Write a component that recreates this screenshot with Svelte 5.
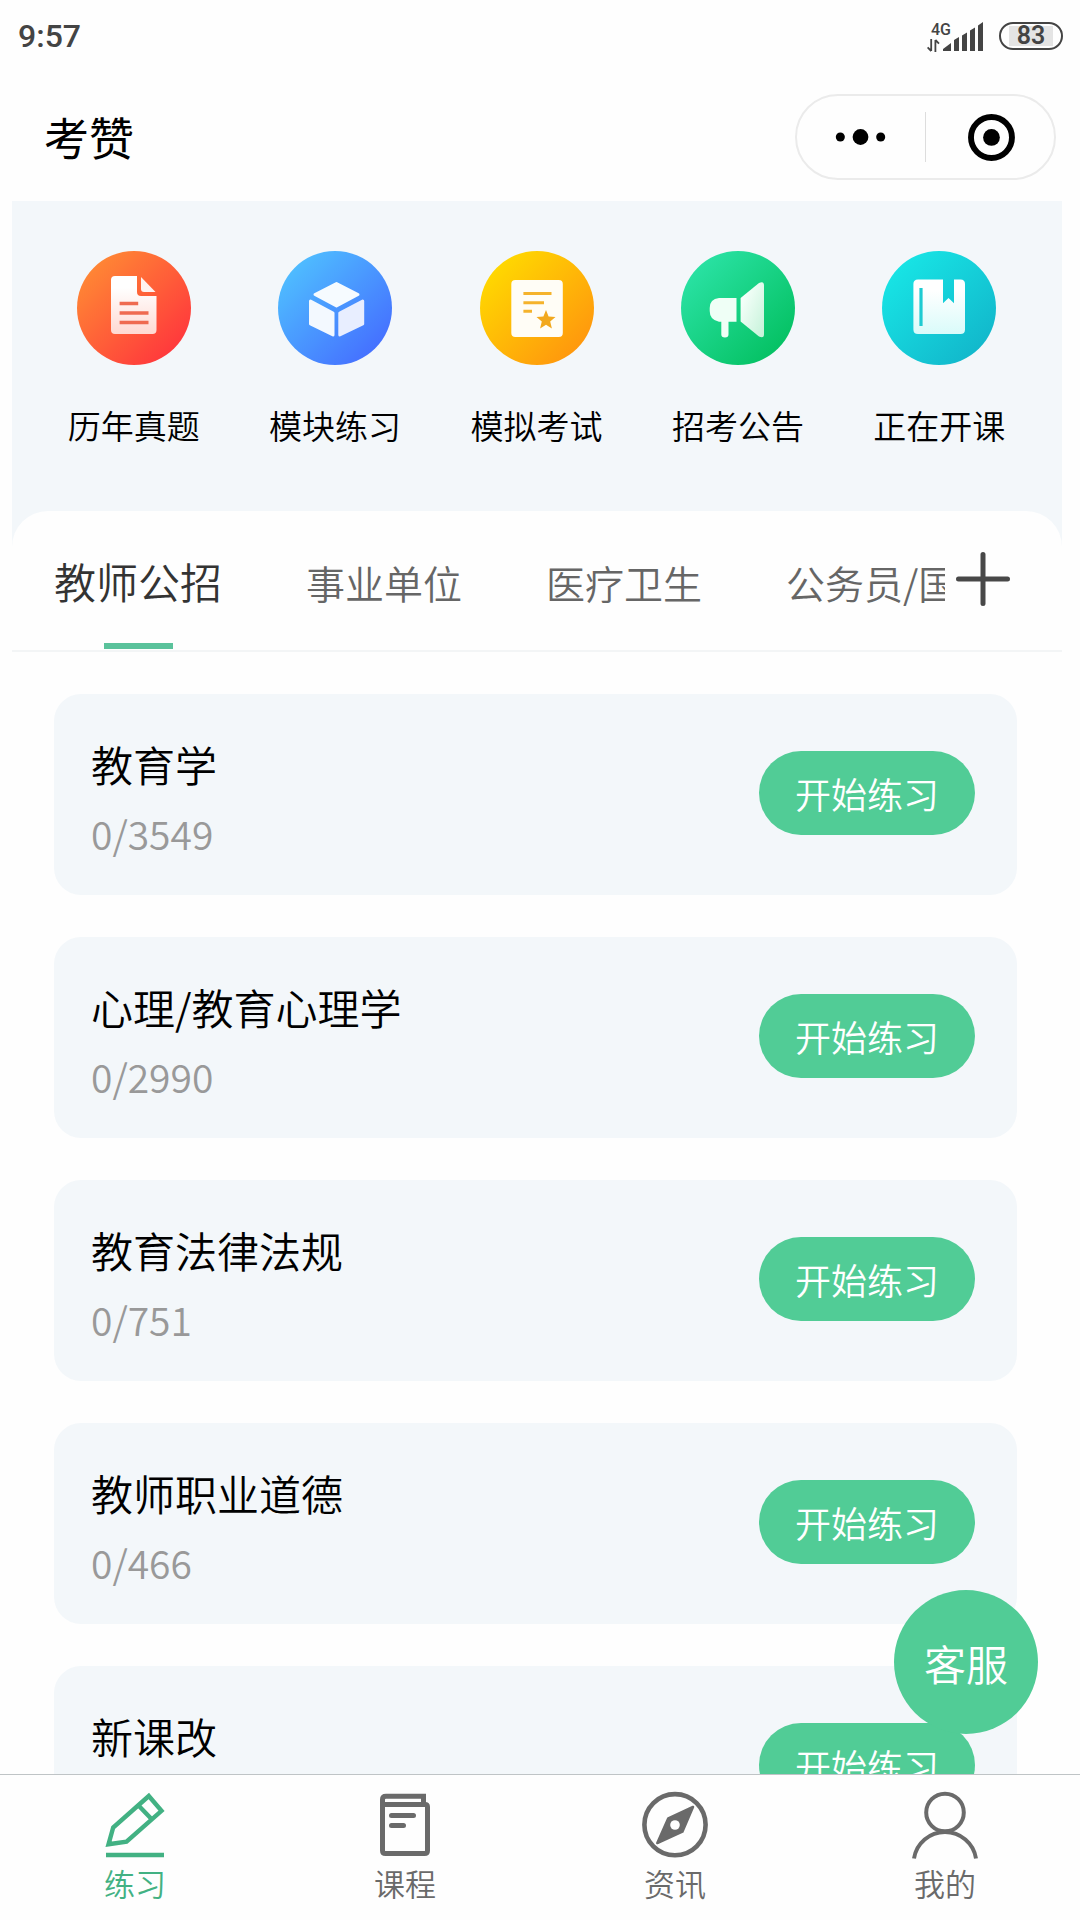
<script lang="ts">
	const entries = [
		{ name: 'paper', label: '历年真题' },
		{ name: 'module', label: '模块练习' },
		{ name: 'mock', label: '模拟考试' },
		{ name: 'notice', label: '招考公告' },
		{ name: 'course', label: '正在开课' }
	];

	const categories = ['教师公招', '事业单位', '医疗卫生', '公务员/国企'];

	const subjects = [
		{ title: '教育学', done: 0, total: 3549 },
		{ title: '心理/教育心理学', done: 0, total: 2990 },
		{ title: '教育法律法规', done: 0, total: 751 },
		{ title: '教师职业道德', done: 0, total: 466 },
		{ title: '新课改', done: 0, total: 320 }
	];

	const navItems = [
		{ name: 'practice', label: '练习' },
		{ name: 'lessons', label: '课程' },
		{ name: 'news', label: '资讯' },
		{ name: 'mine', label: '我的' }
	];

	let activeCategory = $state(0);
	let activeNav = $state('practice');
</script>

<div class="app">
	<div class="status">
		<span class="time">9:57</span>
		<div class="status-right">
			<div class="network">
				<span class="net-type">4G</span>
				<svg class="arrows" width="13" height="13" viewBox="0 0 13 13">
					<path d="M4.2 0V12M4.2 12L.6 8.4M8.4 13V1M8.4 1L12 4.6" fill="none" stroke="#444" stroke-width="1.8" />
				</svg>
			</div>
			<svg class="signal" width="41" height="30" viewBox="0 0 41 30">
				<path d="M0 30V28L8 22V30ZM11 30V19L16 16V30ZM19 30V14.5L24 11.5V30ZM27 30V9.5L32 6.5V30ZM35 30V4.5L40 1V30Z" fill="#444" />
			</svg>
			<div class="battery"><span>83</span></div>
		</div>
	</div>

	<header>
		<h1>考赞</h1>
		<div class="capsule">
			<svg width="130" height="50" viewBox="0 0 130 50">
				<circle cx="44" cy="25" r="4.6" />
				<circle cx="64.5" cy="25" r="8" />
				<circle cx="85" cy="25" r="4.6" />
			</svg>
			<svg class="close" width="130" height="50" viewBox="0 0 130 50">
				<circle cx="66.5" cy="25.5" r="20.8" fill="none" stroke="#000" stroke-width="6" />
				<circle cx="66.5" cy="25.5" r="8.5" />
			</svg>
		</div>
	</header>

	<main>
		<nav class="entries">
			{#each entries as entry}
				<div class="entry">
					<div class="disc {entry.name}">
						<svg viewBox="0 0 114 114">
							{#if entry.name === 'paper'}
								<linearGradient id="g-paper" x1="0" y1="0" x2="0" y2="1">
									<stop offset="0.2" stop-color="#fff" />
									<stop offset="1" stop-color="#ffd9d2" />
								</linearGradient>
								<path d="M38 25H60V41Q60 45 64 45H79.5V79Q79.5 83 75.5 83H38Q34 83 34 79V29Q34 25 38 25Z" fill="url(#g-paper)" />
								<path d="M64 26L78.5 41H67Q64 41 64 38Z" fill="#fff2ef" />
								<path d="M42.6 52.5H61.2M42.6 62H71.5M42.6 71.5H71.5" stroke="#ef6a50" stroke-width="3.4" />
							{:else if entry.name === 'module'}
								<linearGradient id="g-module" x1="0" y1="0" x2="1" y2="1">
									<stop offset="0.2" stop-color="#fff" />
									<stop offset="1" stop-color="#dfe6ff" />
								</linearGradient>
								<g stroke-width="3" stroke-linejoin="round">
									<path d="M58.5 32.5L80 43.5L58.5 55L37 43.5Z" fill="#f6fbff" stroke="#f6fbff" />
									<path d="M32.5 50L55 62V84L32.5 73Z" fill="#f3f9ff" stroke="#f3f9ff" />
									<path d="M84.7 50L61.8 62V84L84.7 73Z" fill="#e8eeff" stroke="#e8eeff" />
								</g>
							{:else if entry.name === 'mock'}
								<rect x="31.3" y="29" width="51.5" height="57" rx="4" fill="#fffdf6" />
								<path d="M43.4 42.5H71.5M43.4 51.7H64M43.4 60.3H52" stroke="#f5b32c" stroke-width="3" />
								<path d="M66 59L68.6 65.6L75.5 66.1L70.2 70.6L71.9 77.4L66 73.7L60.1 77.4L61.8 70.6L56.5 66.1L63.4 65.6Z" fill="#f2a81d" />
							{:else if entry.name === 'notice'}
								<linearGradient id="g-notice" x1="0" y1="0" x2="1" y2="1">
									<stop offset="0.2" stop-color="#f4fff9" />
									<stop offset="1" stop-color="#c4f2d8" />
								</linearGradient>
								<path d="M38 47H55.5V70.7H47.5V83.5Q47.5 86.5 44 86.5Q40.3 86.5 40.3 83.5V70.7H38Q28.7 69 28.7 60V57Q28.7 48 38 47Z" fill="#effff6" />
								<path d="M59.6 47L78 32Q83 29.5 83 34.5V83Q83 88 78 85.5L59.6 70.5Z" fill="url(#g-notice)" />
							{:else}
								<linearGradient id="g-course" x1="0" y1="0" x2="0" y2="1">
									<stop offset="0.2" stop-color="#fff" />
									<stop offset="1" stop-color="#d9fbfa" />
								</linearGradient>
								<path d="M36 28.5H61V52.3L66.5 47L72 52.3V28.5H78.5Q83 28.5 83 33V78.5Q83 83 78.5 83H36Q31.4 83 31.4 78.5V33Q31.4 28.5 36 28.5Z" fill="url(#g-course)" />
								<path d="M39 37V75" stroke="#1fcbd2" stroke-width="3.2" />
							{/if}
						</svg>
					</div>
					<span>{entry.label}</span>
				</div>
			{/each}
		</nav>

		<section class="sheet">
			<div class="categories">
				<div class="scroller">
					{#each categories as category, index}
						<button
							class="category"
							class:active={index === activeCategory}
							onclick={() => (activeCategory = index)}
						>
							{category}
						</button>
					{/each}
				</div>
				<svg class="plus" width="54" height="54" viewBox="0 0 54 54">
					<path d="M2.5 27H51.5M27 2.5V51.5" stroke="#484848" stroke-width="5" stroke-linecap="round" />
				</svg>
			</div>

			<div class="subjects">
				{#each subjects as subject}
					<article class="card">
						<div>
							<h2>{subject.title}</h2>
							<p>{subject.done}/{subject.total}</p>
						</div>
						<button class="start">开始练习</button>
					</article>
				{/each}
			</div>
		</section>
	</main>

	<button class="service">客服</button>

	<footer>
		{#each navItems as item}
			<button
				class="nav-item"
				class:active={item.name === activeNav}
				onclick={() => (activeNav = item.name)}
			>
				<svg width="72" height="72" viewBox="0 0 72 72" fill="none" stroke="currentColor">
					{#if item.name === 'practice'}
						<path d="M49.8 8L62.5 22.8L27.5 53.7L9.5 56.3L14.2 39.5ZM39.5 17.5L52.5 31" stroke-width="4.4" />
						<path d="M7 67H65" stroke-width="4.4" />
					{:else if item.name === 'lessons'}
						<path d="M13.5 18V11.5Q13.5 8.3 17 8.3H54.5V15" stroke-width="5" />
						<path d="M13.5 16.5H56Q58.5 16.5 58.5 19V62.5Q58.5 65.5 55.5 65.5H16.5Q13.5 65.5 13.5 62.5Z" stroke-width="5" />
						<path d="M22.5 27.5H44.5M22.5 37.5H34.5" stroke-width="5" stroke-linecap="round" />
					{:else if item.name === 'news'}
						<circle cx="36" cy="36.7" r="30.6" stroke-width="4.6" />
						<path d="M54 19L29.3 30.3L18.3 55L43.4 43.7Z" fill="currentColor" stroke-width="2.5" stroke-linejoin="round" />
						<circle cx="36" cy="37" r="4.8" fill="#fff" stroke="none" />
					{:else}
						<circle cx="36" cy="24.5" r="18.8" stroke-width="4" />
						<path d="M5 70.5A31.4 31.4 0 0 1 67 70.5" stroke-width="4" />
					{/if}
				</svg>
				<span>{item.label}</span>
			</button>
		{/each}
	</footer>
</div>

<style>
	:global(body) {
		background: #fff;
	}

	.app {
		position: relative;
		display: flex;
		flex-direction: column;
		width: 1080px;
		height: 1920px;
		overflow: hidden;
		background: #fefefe;
		font-family: 'Noto Sans CJK SC', sans-serif;
		font-weight: 350;
	}

	h1,
	h2,
	p {
		margin: 0;
		font-weight: inherit;
	}

	button {
		padding: 0;
		border: none;
		background: none;
		color: inherit;
		font: inherit;
	}

	.status {
		display: flex;
		justify-content: space-between;
		align-items: center;
		height: 72px;
		box-sizing: border-box;
		padding: 0 17px 0 18px;
		font-family: Roboto, sans-serif;
		color: #444;
	}

	.time {
		font-size: 32px;
		font-weight: 500;
	}

	.status-right {
		display: flex;
		align-items: center;
	}

	.network {
		display: flex;
		flex-direction: column;
		width: 26px;
		height: 32px;
		margin-right: -10px;
	}

	.net-type {
		margin-left: 4px;
		font-size: 16px;
		font-weight: 500;
		line-height: 19px;
	}

	.signal {
		margin-right: 15px;
	}

	.battery {
		width: 64px;
		height: 28px;
		box-sizing: border-box;
		border: 2.5px solid #444;
		border-radius: 14px;
		background: linear-gradient(#e4e4e4, #e4e4e4) center / 44px 20px no-repeat;
		text-align: center;
		font-size: 25px;
		font-weight: 600;
		line-height: 24px;
	}

	header {
		display: flex;
		justify-content: space-between;
		align-items: center;
		height: 129px;
		box-sizing: border-box;
		padding: 0 24px 0 44px;
	}

	h1 {
		font-size: 45px;
		font-weight: 400;
		color: #000;
	}

	.capsule {
		display: flex;
		align-items: center;
		width: 261px;
		height: 86px;
		box-sizing: border-box;
		border: 2px solid #ebebeb;
		border-radius: 43px;
	}

	.close {
		border-left: 1px solid #ddd;
	}

	main {
		flex: 1;
		width: 1050px;
		min-height: 0;
		margin-left: 12px;
		overflow: hidden;
		background: #f3f7fa;
	}

	.entries {
		display: flex;
		height: 310px;
		padding: 0 22px 0 21px;
	}

	.entry {
		display: flex;
		flex: 1;
		flex-direction: column;
		align-items: center;
		padding-top: 50px;
		font-size: 33px;
		line-height: 48px;
		color: #000;
	}

	.disc {
		width: 114px;
		height: 114px;
		margin-bottom: 36px;
		border-radius: 50%;
	}

	.disc svg {
		display: block;
	}

	.paper {
		background: linear-gradient(135deg, #ff8a34 10%, #ff3a3c 85%);
	}

	.module {
		background: linear-gradient(135deg, #4fc0ff 10%, #4572ff 85%);
	}

	.mock {
		background: linear-gradient(135deg, #ffdb00 10%, #ff990d 85%);
	}

	.notice {
		background: linear-gradient(135deg, #2be3a6 10%, #06c265 85%);
	}

	.course {
		background: linear-gradient(135deg, #18e6e6 10%, #12b9cc 85%);
	}

	.sheet {
		min-height: 1300px;
		border-radius: 36px 36px 0 0;
		background: #fefefe;
	}

	.categories {
		display: flex;
		height: 141px;
		box-sizing: border-box;
		border-bottom: 2px solid #f3f5f6;
	}

	.scroller {
		display: flex;
		width: 933px;
		overflow: hidden;
	}

	.category {
		display: flex;
		flex: none;
		flex-direction: column;
		align-items: center;
		justify-content: space-between;
		padding: 42px 42px 0;
		font-size: 39px;
		line-height: 58px;
		color: #666;
	}

	.category.active {
		padding-top: 41px;
		font-size: 42px;
		color: #333;
	}

	.category.active::after {
		content: '';
		width: 69px;
		height: 6px;
		margin-bottom: 1px;
		background: #5ac29b;
	}

	.plus {
		margin: 41px 0 0 11px;
	}

	.subjects {
		display: flex;
		flex-direction: column;
		gap: 42px;
		padding: 42px 45px 0 42px;
	}

	.card {
		display: flex;
		justify-content: space-between;
		height: 201px;
		box-sizing: border-box;
		padding: 39px 42px 0 37px;
		border-radius: 27px;
		background: #f3f7fa;
	}

	h2 {
		font-size: 42px;
		line-height: 62px;
		color: #000;
	}

	p {
		margin-top: 9px;
		font-size: 39px;
		line-height: 58px;
		color: #999;
	}

	.start {
		width: 216px;
		height: 84px;
		margin-top: 18px;
		border-radius: 42px;
		background: #51cc96;
		font-size: 36px;
		color: #fff;
	}

	.service {
		position: absolute;
		top: 1590px;
		left: 894px;
		width: 144px;
		height: 144px;
		border-radius: 50%;
		background: #51cc96;
		font-size: 42px;
		color: #fff;
	}

	footer {
		display: flex;
		height: 146px;
		box-sizing: border-box;
		border-top: 1px solid #bfc4c6;
		background: #fefefe;
	}

	.nav-item {
		display: flex;
		flex: 1;
		flex-direction: column;
		align-items: center;
		padding-top: 13px;
		font-size: 31px;
		line-height: 46px;
		color: #6a6a6a;
	}

	.nav-item.active {
		color: #42b183;
	}
</style>
